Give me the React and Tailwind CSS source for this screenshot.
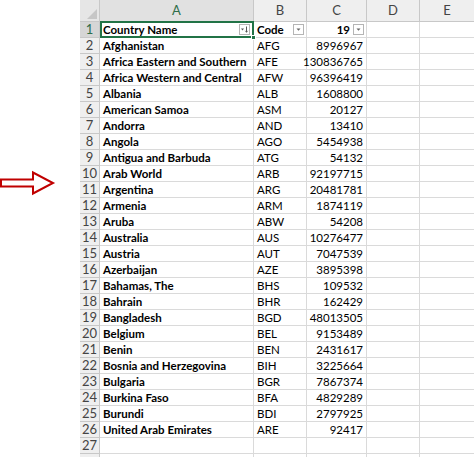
import React from "react";

const rows = [
  ["Afghanistan", "AFG", "8996967"],
  ["Africa Eastern and Southern", "AFE", "130836765"],
  ["Africa Western and Central", "AFW", "96396419"],
  ["Albania", "ALB", "1608800"],
  ["American Samoa", "ASM", "20127"],
  ["Andorra", "AND", "13410"],
  ["Angola", "AGO", "5454938"],
  ["Antigua and Barbuda", "ATG", "54132"],
  ["Arab World", "ARB", "92197715"],
  ["Argentina", "ARG", "20481781"],
  ["Armenia", "ARM", "1874119"],
  ["Aruba", "ABW", "54208"],
  ["Australia", "AUS", "10276477"],
  ["Austria", "AUT", "7047539"],
  ["Azerbaijan", "AZE", "3895398"],
  ["Bahamas, The", "BHS", "109532"],
  ["Bahrain", "BHR", "162429"],
  ["Bangladesh", "BGD", "48013505"],
  ["Belgium", "BEL", "9153489"],
  ["Benin", "BEN", "2431617"],
  ["Bosnia and Herzegovina", "BIH", "3225664"],
  ["Bulgaria", "BGR", "7867374"],
  ["Burkina Faso", "BFA", "4829289"],
  ["Burundi", "BDI", "2797925"],
  ["United Arab Emirates", "ARE", "92417"],
];

function Drop({ sort }) {
  return (
    <div className="w-[11px] h-[11px] border border-[#b5b5b5] bg-white flex items-center justify-center shrink-0">
      <svg width="9" height="9" viewBox="0 0 9 9">
        {sort ? (
          <>
            <path d="M1 3.5 L4 3.5 L2.5 5.5 Z" fill="#555" />
            <path d="M6.5 1.5 L6.5 7" stroke="#555" strokeWidth="1" />
            <path d="M5.3 5.8 L6.5 7.4 L7.7 5.8" stroke="#555" strokeWidth="0.8" fill="none" />
          </>
        ) : (
          <path d="M2.5 3.5 L6.5 3.5 L4.5 5.8 Z" fill="#666" />
        )}
      </svg>
    </div>
  );
}

const cellB = "border-r border-b border-[#dadada]";

export default function App() {
  const font = { fontFamily: "Lato, 'Noto Sans', sans-serif" };
  return (
    <div className="w-[474px] h-[457px] bg-white flex overflow-hidden text-black" style={font}>
      <div className="w-[80px] shrink-0 pt-[170px]">
        <svg width="58" height="26" viewBox="0 0 58 26">
          <path
            d="M1 9.5 L33 9.5 L33 2.5 L53 13 L33 23.5 L33 16.5 L1 16.5 Z"
            fill="white"
            stroke="#c00000"
            strokeWidth="2"
            strokeLinejoin="miter"
          />
        </svg>
      </div>
      <div className="flex flex-col text-[11.5px] leading-none">
        {/* column header */}
        <div className="flex h-[22px] shrink-0 bg-[#efefef] text-[#444] text-[13px]">
          <div className="w-[20px] border-r border-b border-[#c8c8c8] relative bg-[#e6e6e6]">
            <svg className="absolute right-[2px] bottom-[2px]" width="10" height="10" viewBox="0 0 10 10">
              <path d="M10 0 L10 10 L0 10 Z" fill="#c6c6c6" />
            </svg>
          </div>
          <div className="w-[154px] border-r border-b border-r-[#c8c8c8] border-b-[#5f9a78] bg-[#e1e1e1] text-[#2f6e4a] flex items-center justify-center">A</div>
          <div className="w-[53px] border-r border-b border-[#c8c8c8] flex items-center justify-center">B</div>
          <div className="w-[60px] border-r border-b border-[#c8c8c8] flex items-center justify-center">C</div>
          <div className="w-[53px] border-r border-b border-[#c8c8c8] flex items-center justify-center">D</div>
          <div className="w-[54px] border-b border-[#c8c8c8] flex items-center justify-center">E</div>
        </div>
        {/* row 1 */}
        <div className="flex h-[16px] shrink-0">
          <div className="w-[20px] bg-[#d6d6d6] border-r border-b border-[#c8c8c8] text-[#2f6e4a] text-[13px] flex items-center justify-center">1</div>
          <div className="w-[154px] relative border-2 border-[#217346] -mt-px h-[17px] flex items-center justify-between pl-[1px] pr-[2px] font-bold">
            <span>Country Name</span>
            <Drop sort />
            <div className="absolute right-[-4px] bottom-[-4px] w-[5px] h-[5px] bg-[#217346] border border-white" />
          </div>
          <div className={`w-[53px] ${cellB} flex items-center justify-between pl-[3px] pr-[2px] font-bold`}>
            <span>Code</span>
            <Drop />
          </div>
          <div className={`w-[60px] ${cellB} flex items-center justify-end gap-[3px] pr-[2px] font-bold`}>
            <span>19</span>
            <Drop />
          </div>
          <div className={`w-[53px] ${cellB}`} />
          <div className="w-[54px] border-b border-[#dadada]" />
        </div>
        {rows.map((r, i) => (
          <div key={i} className="flex h-[16px] shrink-0">
            <div className="w-[20px] bg-[#efefef] border-r border-b border-[#c8c8c8] text-[#444] text-[13px] flex items-center justify-center">{i + 2}</div>
            <div className={`w-[154px] ${cellB} flex items-center pl-[3px] font-bold whitespace-nowrap`}>{r[0]}</div>
            <div className={`w-[53px] ${cellB} flex items-center pl-[3px]`}>{r[1]}</div>
            <div className={`w-[60px] ${cellB} flex items-center justify-end pr-[3px]`}>{r[2]}</div>
            <div className={`w-[53px] ${cellB}`} />
            <div className="w-[54px] border-b border-[#dadada]" />
          </div>
        ))}
        {[27, 28].map((n) => (
          <div key={n} className="flex h-[16px] shrink-0">
            <div className="w-[20px] bg-[#efefef] border-r border-b border-[#c8c8c8] text-[#444] text-[13px] flex items-center justify-center">{n === 27 ? "27" : ""}</div>
            <div className={`w-[154px] ${cellB}`} />
            <div className={`w-[53px] ${cellB}`} />
            <div className={`w-[60px] ${cellB}`} />
            <div className={`w-[53px] ${cellB}`} />
            <div className="w-[54px] border-b border-[#dadada]" />
          </div>
        ))}
      </div>
    </div>
  );
}
